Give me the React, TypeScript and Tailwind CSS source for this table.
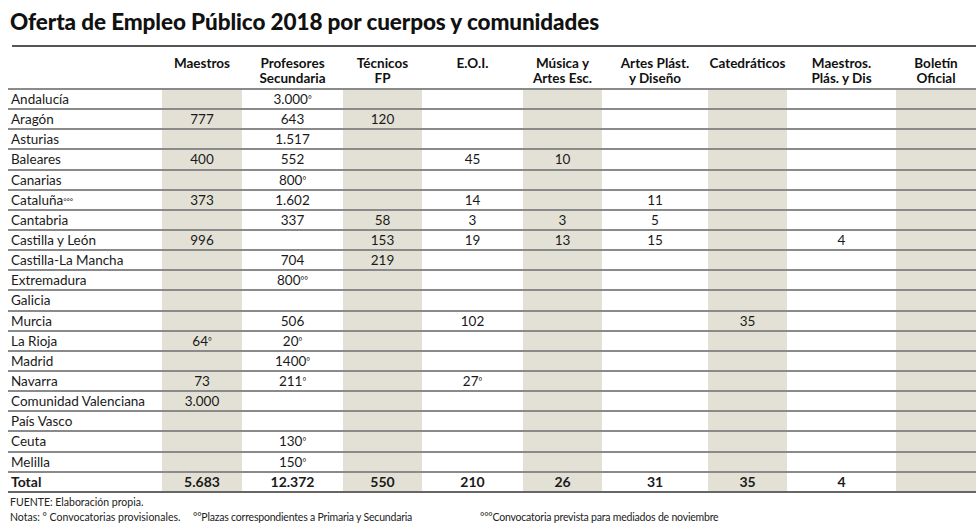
import React from 'react';

// columnas: [cabecera, sombreada]
const COLUMNS: { label: string[]; shaded: boolean }[] = [
  { label: ['Maestros'], shaded: true },
  { label: ['Profesores', 'Secundaria'], shaded: false },
  { label: ['Técnicos', 'FP'], shaded: true },
  { label: ['E.O.I.'], shaded: false },
  { label: ['Música y', 'Artes Esc.'], shaded: true },
  { label: ['Artes Plást.', 'y Diseño'], shaded: false },
  { label: ['Catedráticos'], shaded: true },
  { label: ['Maestros.', 'Plás. y Dis'], shaded: false },
  { label: ['Boletín', 'Oficial'], shaded: true },
];

type Cell = string | [string, string] | '';

const ROWS: { name: string; mark?: string; cells: Cell[] }[] = [
  { name: 'Andalucía', cells: ['', ['3.000', '°'], '', '', '', '', '', '', ''] },
  { name: 'Aragón', cells: ['777', '643', '120', '', '', '', '', '', ''] },
  { name: 'Asturias', cells: ['', '1.517', '', '', '', '', '', '', ''] },
  { name: 'Baleares', cells: ['400', '552', '', '45', '10', '', '', '', ''] },
  { name: 'Canarias', cells: ['', ['800', '°'], '', '', '', '', '', '', ''] },
  { name: 'Cataluña', mark: '°°°', cells: ['373', '1.602', '', '14', '', '11', '', '', ''] },
  { name: 'Cantabria', cells: ['', '337', '58', '3', '3', '5', '', '', ''] },
  { name: 'Castilla y León', cells: ['996', '', '153', '19', '13', '15', '', '4', ''] },
  { name: 'Castilla-La Mancha', cells: ['', '704', '219', '', '', '', '', '', ''] },
  { name: 'Extremadura', cells: ['', ['800', '°°'], '', '', '', '', '', '', ''] },
  { name: 'Galicia', cells: ['', '', '', '', '', '', '', '', ''] },
  { name: 'Murcia', cells: ['', '506', '', '102', '', '', '35', '', ''] },
  { name: 'La Rioja', cells: [['64', '°'], ['20', '°'], '', '', '', '', '', '', ''] },
  { name: 'Madrid', cells: ['', ['1400', '°'], '', '', '', '', '', '', ''] },
  { name: 'Navarra', cells: ['73', ['211', '°'], '', ['27', '°'], '', '', '', '', ''] },
  { name: 'Comunidad Valenciana', cells: ['3.000', '', '', '', '', '', '', '', ''] },
  { name: 'País Vasco', cells: ['', '', '', '', '', '', '', '', ''] },
  { name: 'Ceuta', cells: ['', ['130', '°'], '', '', '', '', '', '', ''] },
  { name: 'Melilla', cells: ['', ['150', '°'], '', '', '', '', '', '', ''] },
];

const TOTAL = ['5.683', '12.372', '550', '210', '26', '31', '35', '4', ''];

const GRID = 'grid grid-cols-[154px_80px_101px_79px_101px_79px_106px_79px_109px_80px]';

function Value({ v }: { v: Cell }) {
  if (!v) return null;
  if (Array.isArray(v)) {
    return (
      <span>
        {v[0]}
        <sup className="text-[9px] relative top-[-1px]">{v[1]}</sup>
      </span>
    );
  }
  return <span>{v}</span>;
}

export default function App() {
  return (
    <div
      className="w-[980px] h-[529px] bg-white text-[#1a1a1a] overflow-hidden"
      style={{ fontFamily: 'Lato, "Noto Sans", sans-serif' }}
    >
      <h1 className="pl-[10px] pt-[8px] h-[45px] text-[22.5px] font-black leading-[28px] tracking-[-0.1px] text-[#111]">
        Oferta de Empleo Público 2018 por cuerpos y comunidades
      </h1>

      <div className="ml-[12px] w-[964px] border-t-2 border-[#555]" />

      <div className="ml-[8px] w-[968px]">
        {/* cabecera */}
        <div className={`${GRID} h-[41px] pt-[9px] text-[13.5px] font-bold leading-[15px] text-[#111]`}>
          <div />
          {COLUMNS.map((c, i) => (
            <div key={i} className="text-center">
              {c.label.map((l, j) => (
                <div key={j}>{l}</div>
              ))}
            </div>
          ))}
        </div>

        {ROWS.map(row => (
          <div
            key={row.name}
            className={`${GRID} h-[20.15px] border-t-2 border-[#8a8a8a] text-[13.5px] leading-[18px]`}
          >
            <div className="pl-[3px] whitespace-nowrap">
              {row.name}
              {row.mark && <sup className="text-[8px] relative top-[-1px]">{row.mark}</sup>}
            </div>
            {row.cells.map((v, i) => (
              <div
                key={i}
                className={`text-center ${COLUMNS[i].shaded ? 'bg-[#e3e1d5]' : ''}`}
              >
                <Value v={v} />
              </div>
            ))}
          </div>
        ))}

        {/* total */}
        <div
          className={`${GRID} h-[22px] border-t-2 border-b-2 border-[#8a8a8a] border-b-[#666] text-[14px] font-bold leading-[18px]`}
        >
          <div className="pl-[3px]">Total</div>
          {TOTAL.map((v, i) => (
            <div
              key={i}
              className={`text-center ${COLUMNS[i].shaded ? 'bg-[#e3e1d5]' : ''}`}
            >
              {v}
            </div>
          ))}
        </div>
      </div>

      <div className="pl-[10px] pt-[2px] text-[10.5px] leading-[15px] text-[#222]">
        <div>FUENTE: Elaboración propia.</div>
        <div className="flex">
          <span className="w-[183px]">Notas: ° Convocatorias provisionales.</span>
          <span className="w-[287px] tracking-[-0.2px]">°°Plazas correspondientes a Primaria y Secundaria</span>
          <span className="tracking-[-0.2px]">°°°Convocatoria prevista para mediados de noviembre</span>
        </div>
      </div>
    </div>
  );
}
